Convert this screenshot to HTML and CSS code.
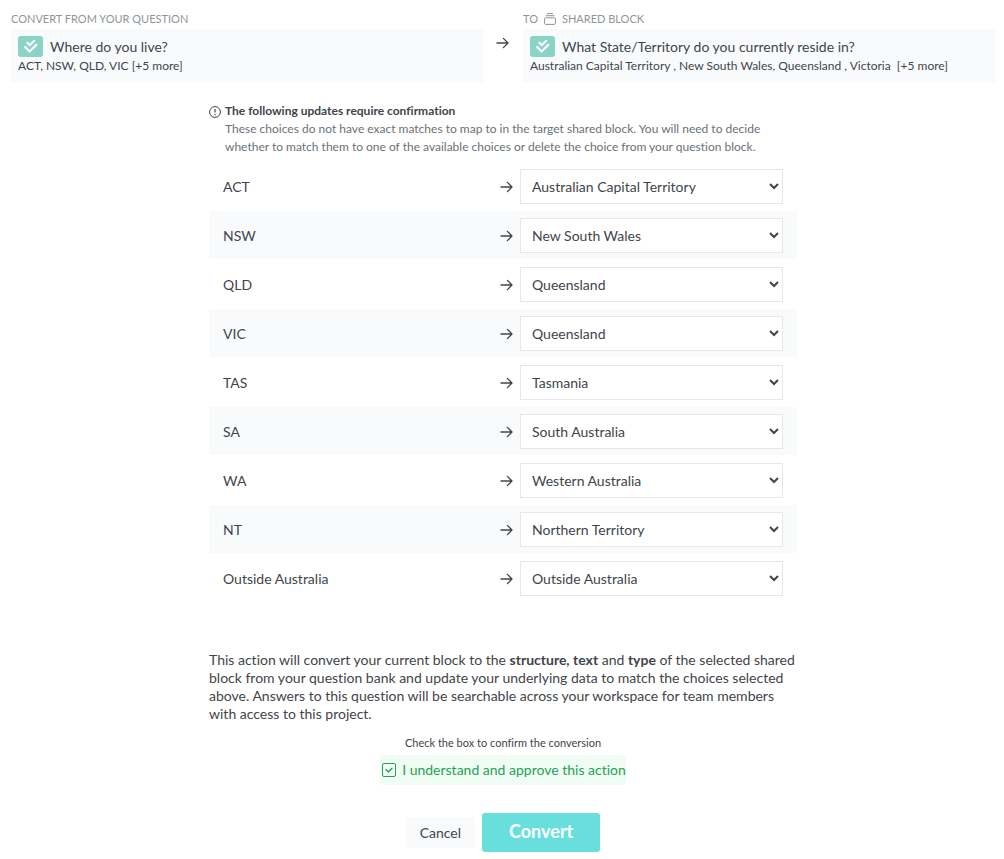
FILE: index.html
```html
<!DOCTYPE html>
<html lang="en">
<head>
<meta charset="utf-8">
<title>Convert to shared block</title>
<link rel="stylesheet" href="styles.css">
</head>
<body>
<svg class="sprite" aria-hidden="true">
  <symbol id="arrow" viewBox="0 0 14 14"><path d="M1 7h11M7.4 2.4 12 7l-4.6 4.6" fill="none" stroke="currentColor" stroke-width="1.3" stroke-linecap="round" stroke-linejoin="round"/></symbol>
  <symbol id="checks" viewBox="0 0 25 21"><path d="m9.4 6.8 2.4 2.4 4.4-4.4M7 11l4.6 4.6 6.8-6.8" fill="none" stroke="currentColor" stroke-width="2.1" stroke-linecap="round" stroke-linejoin="round"/></symbol>
</svg>

<header class="mapping">
  <section class="source">
    <h2 class="label">CONVERT FROM YOUR QUESTION</h2>
    <div class="card">
      <div class="card-title"><svg class="badge"><use href="#checks"/></svg>Where do you live?</div>
      <p class="card-choices">ACT, NSW, QLD, VIC [+5 more]</p>
    </div>
  </section>
  <svg class="arrow mapping-arrow"><use href="#arrow"/></svg>
  <section class="target">
    <h2 class="label">TO
      <svg class="block-icon" viewBox="0 0 12 12"><path d="M3 .6h6M1.7 2.7h8.6" fill="none" stroke="currentColor"/><rect x=".6" y="4.8" width="10.8" height="6.6" rx="1" fill="none" stroke="currentColor"/></svg>
      SHARED BLOCK</h2>
    <div class="card">
      <div class="card-title"><svg class="badge"><use href="#checks"/></svg>What State/Territory do you currently reside in?</div>
      <p class="card-choices">Australian Capital Territory , New South Wales, Queensland , Victoria &nbsp;[+5 more]</p>
    </div>
  </section>
</header>

<main class="content">
  <div class="notice">
    <svg class="notice-icon" viewBox="0 0 12 12"><circle cx="6" cy="6" r="5.4" fill="none" stroke="currentColor"/><path d="M6 3v3.6M6 8v1.2" fill="none" stroke="currentColor" stroke-width="1.2"/></svg>
    <div>
      <h1 class="notice-title">The following updates require confirmation</h1>
      <p class="notice-text">These choices do not have exact matches to map to in the target shared block. You will need to decide whether to match them to one of the available choices or delete the choice from your question block.</p>
    </div>
  </div>

  <div class="choices">
    <div class="choice"><label for="act">ACT</label><svg class="arrow"><use href="#arrow"/></svg><select id="act"><option>Australian Capital Territory</option></select></div>
    <div class="choice"><label for="nsw">NSW</label><svg class="arrow"><use href="#arrow"/></svg><select id="nsw"><option>New South Wales</option></select></div>
    <div class="choice"><label for="qld">QLD</label><svg class="arrow"><use href="#arrow"/></svg><select id="qld"><option>Queensland</option></select></div>
    <div class="choice"><label for="vic">VIC</label><svg class="arrow"><use href="#arrow"/></svg><select id="vic"><option>Queensland</option></select></div>
    <div class="choice"><label for="tas">TAS</label><svg class="arrow"><use href="#arrow"/></svg><select id="tas"><option>Tasmania</option></select></div>
    <div class="choice"><label for="sa">SA</label><svg class="arrow"><use href="#arrow"/></svg><select id="sa"><option>South Australia</option></select></div>
    <div class="choice"><label for="wa">WA</label><svg class="arrow"><use href="#arrow"/></svg><select id="wa"><option>Western Australia</option></select></div>
    <div class="choice"><label for="nt">NT</label><svg class="arrow"><use href="#arrow"/></svg><select id="nt"><option>Northern Territory</option></select></div>
    <div class="choice"><label for="outside">Outside Australia</label><svg class="arrow"><use href="#arrow"/></svg><select id="outside"><option>Outside Australia</option></select></div>
  </div>

  <p class="summary">This action will convert your current block to the <b>structure, text</b> and <b>type</b> of the selected shared block from your question bank and update your underlying data to match the choices selected above. Answers to this question will be searchable across your workspace for team members with access to this project.</p>

  <div class="confirm">
    <p class="confirm-hint">Check the box to confirm the conversion</p>
    <label class="confirm-box">
      <span class="tick">
        <input type="checkbox" checked>
        <svg viewBox="0 0 14 14"><path d="m4.2 6.8 2.1 2.1L10 5.2" fill="none" stroke="currentColor" stroke-width="1.4" stroke-linecap="round" stroke-linejoin="round"/></svg>
      </span>
      I understand and approve this action
    </label>
  </div>

  <div class="actions">
    <button type="button" class="cancel">Cancel</button>
    <button type="button" class="convert">Convert</button>
  </div>
</main>
</body>
</html>
```
FILE: styles.css
```css
* { box-sizing: border-box; }

body {
  margin: 0;
  padding: 11px 9px 0 11px;
  background: #fff;
  color: #41454b;
  font: 14px/18px Lato, sans-serif;
  font-variant-ligatures: none;
}

h1, h2, p { margin: 0; }
svg { display: block; flex: none; }
.sprite { position: absolute; width: 0; height: 0; }

.mapping {
  display: grid;
  grid-template-columns: 1fr 40px 1fr;
}

.label {
  display: flex;
  align-items: center;
  gap: 6px;
  height: 18px;
  padding-bottom: 3px;
  color: #8f959b;
  font-size: 11px;
  font-weight: 400;
  line-height: 15px;
}

.block-icon { width: 12px; height: 12px; }

.card {
  padding: 7px;
  background: #f9fafc;
}

.card-title {
  display: flex;
  align-items: center;
  gap: 7px;
}

.badge {
  width: 25px;
  height: 21px;
  border-radius: 3px;
  background: #8ad3c7;
  color: #fff;
}

.card-choices {
  font-size: 12px;
  line-height: 18px;
}

.arrow { width: 14px; height: 14px; }

.mapping-arrow {
  justify-self: center;
  margin-top: 25px;
}

.content {
  max-width: 588px;
  margin: 20px auto 0;
}

.notice {
  display: flex;
  gap: 4px;
  padding-right: 24px;
  font-size: 12px;
}

.notice-icon {
  width: 12px;
  height: 12px;
  margin-top: 4px;
}

.notice-title {
  font-size: 12px;
  font-weight: 700;
  line-height: 18px;
}

.notice-text { color: #6b7177; }

.choices {
  display: grid;
  gap: 1px;
  margin-top: 6px;
}

.choice {
  display: grid;
  grid-template-columns: 1fr 14px 263px;
  align-items: center;
  column-gap: 6px;
  padding: 7px 14px 6px;
}

.choice:nth-child(even) { background: #f9fafc; }

.choice select {
  width: 100%;
  height: 35px;
  padding: 0 2px 0 7px;
  border: 1px solid #e5e7eb;
  border-radius: 0;
  background: #fff;
  color: inherit;
  font: inherit;
}

.summary { margin-top: 49px; }

.confirm {
  display: flex;
  flex-direction: column;
  align-items: center;
  margin-top: 11px;
}

.confirm-hint {
  font-size: 11px;
  line-height: 18px;
}

.confirm-box {
  display: flex;
  align-items: center;
  gap: 6px;
  height: 30px;
  margin-top: 3px;
  padding-left: 2px;
  border-radius: 3px;
  background: #effdf4;
  color: #27a057;
}

.tick {
  display: grid;
  width: 14px;
  height: 14px;
}

.tick > * { grid-area: 1 / 1; }
.tick svg { width: 14px; height: 14px; pointer-events: none; }

.tick input {
  appearance: none;
  width: 14px;
  height: 14px;
  margin: 0;
  border: 1px solid;
  border-radius: 2px;
  color: inherit;
}

.actions {
  display: flex;
  align-items: center;
  justify-content: center;
  gap: 7px;
  margin-top: 28px;
}

.actions button {
  border: 0;
  border-radius: 3px;
  font: inherit;
}

.actions .cancel {
  height: 31px;
  padding: 0 14px;
  background: #f9fafc;
  color: inherit;
}

.actions .convert {
  height: 39px;
  padding: 0 27px 3px;
  background: #68dfdd;
  color: #fff;
  font-size: 18px;
  font-weight: 700;
}
```
